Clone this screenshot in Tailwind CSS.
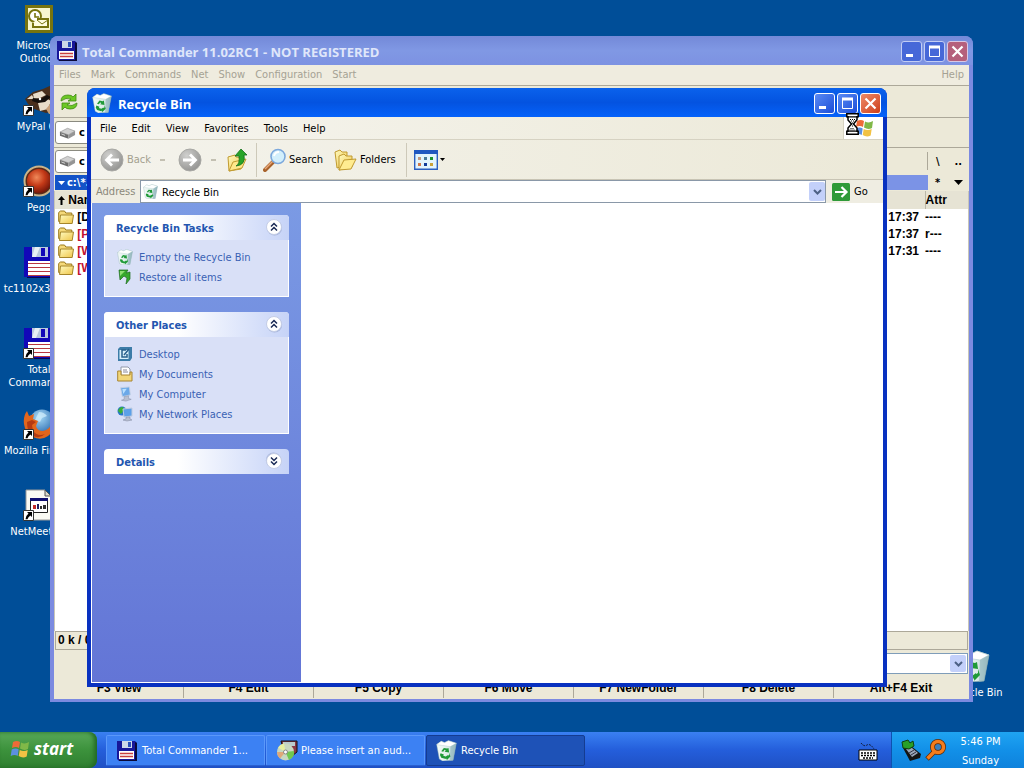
<!DOCTYPE html>
<html lang="en">
<head>
  <meta charset="UTF-8" />
  <meta name="viewport" content="width=device-width, initial-scale=1.0" />
  <title>Recycle Bin</title>
  <script src="https://cdn.jsdelivr.net/npm/@tailwindcss/browser@4"></script>
</head>
<body class="h-screen overflow-hidden flex flex-col bg-[#004e98] font-['DejaVu_Sans_Condensed','DejaVu_Sans',sans-serif] text-[11px] leading-[13px] text-black cursor-default">

  <!-- Shared icons -->
  <svg class="absolute w-0 h-0" aria-hidden="true">
    <defs>
      <linearGradient id="folderFill" x1="0" y1="0" x2="1" y2="1">
        <stop offset="0" stop-color="#fffbc0" /><stop offset="1" stop-color="#efc548" />
      </linearGradient>
      <linearGradient id="binFill" x1="0" y1="0" x2="1" y2="0">
        <stop offset="0" stop-color="#f4fbf8" /><stop offset="0.6" stop-color="#dcece9" /><stop offset="1" stop-color="#9dbcc0" />
      </linearGradient>
      <radialGradient id="greyBall" cx="0.35" cy="0.3" r="0.8">
        <stop offset="0" stop-color="#d0d0ce" /><stop offset="1" stop-color="#8f8f8d" />
      </radialGradient>
      <radialGradient id="redBall" cx="0.4" cy="0.35" r="0.7">
        <stop offset="0" stop-color="#f08a5a" /><stop offset="0.5" stop-color="#c43a18" /><stop offset="1" stop-color="#6e1408" />
      </radialGradient>
      <radialGradient id="globe" cx="0.4" cy="0.3" r="0.8">
        <stop offset="0" stop-color="#a8dcf8" /><stop offset="1" stop-color="#1f5fa8" />
      </radialGradient>
    </defs>
    <symbol id="floppy" viewBox="0 0 32 32">
      <path d="M1 1h28l2 2v28H1z" fill="#1208b8" />
      <path d="M31 3v28H4v1h28V4z" fill="#0a0650" />
      <path d="M9 1h16v10H9z" fill="#b9c8dc" />
      <path d="M12 1h5l-4 10h-4z" fill="#e8f0f4" />
      <path d="M18 2h4v8h-4z" fill="#1208b8" />
      <path d="M5 15h27v15H5z" fill="#fff" />
      <path d="M5 17.500h27M5 21.500h27M5 25.500h27M5 29.500h27" stroke="#b83840" />
    </symbol>
    <symbol id="floppySmall" viewBox="0 0 20 20">
      <path d="M0 0h18l2 2v18H2l-2-2z" fill="#17179a" />
      <path d="M18 1l2 1v18H2v-1h16z" fill="#0a0a38" />
      <path d="M5 0h10v7H5z" fill="#cdd9e8" />
      <path d="M11 1h3v5h-3z" fill="#2a50b8" />
      <path d="M2 10h15v8H2z" fill="#fff" />
      <path d="M3 12.500h13M3 15.500h13" stroke="#c84040" stroke-width="1.300" />
    </symbol>
    <symbol id="bin" viewBox="0 0 32 32">
      <path d="M1 7l7-5 5 2 6-3 12 4-5 26-16 1-5-3z" fill="url(#binFill)" stroke="#8fb0b4" stroke-width="0.7" />
      <path d="M1 7l7-5 5 2 6-3 12 4-9 5z" fill="#fff" stroke="#b8d0d2" stroke-width="0.7" />
      <path d="M22 10l9-5-5 26-5 1z" fill="#8fb4bc" opacity="0.6" />
      <path d="M8 17l4-5 5 1 2-1 1 7-7-1 2-2-2-1-2 3zM7 20l5 2-1 2 4 1v4l-7-2-2-4zM20 19l2 6-5 5v1l-3-5 4-3v1l2-1z" fill="#1f9a38" />
    </symbol>
    <symbol id="shortcut" viewBox="0 0 11 11">
      <path d="M.5.5h10v10H.5z" fill="#fff" stroke="#333" />
      <path d="M4 2h5v5L7.500 5.500Q5 7 4.500 9.200H2.500Q2.600 6 5.500 3.600z" fill="#000" />
    </symbol>
    <symbol id="folder" viewBox="0 0 16 15">
      <path d="M.7 11.500V2.500L2.500 1h4l1.300 2h6v9z" fill="#f5d97a" stroke="#9a7818" stroke-width="1" />
      <path d="M2.500 5h13l-1.300 8.500H1.500z" fill="url(#folderFill)" stroke="#a5852a" stroke-width="1" />
    </symbol>
    <symbol id="drive" viewBox="0 0 18 12">
      <path d="M1 5l8-4 8 3-7 4z" fill="#d0d0d0" stroke="#888" stroke-width="0.6" />
      <path d="M1 5l9 3v4L1 9z" fill="#6c6c6c" />
      <path d="M10 8l7-4v4l-7 4z" fill="#959595" />
      <path d="M2.500 7l4 1.500" stroke="#ddd" />
    </symbol>
    <symbol id="flag" viewBox="0 0 20 20">
      <path d="M3 3q4-2 7 0l-1 6Q6 7 2 9z" fill="#ee6a38" />
      <path d="M11 3.500q4 2 8-.5l-1 7q-4 2-8-.5z" fill="#80b848" />
      <path d="M1.700 10.500q4-2 7 0l-1 6.500q-3-2-7 0z" fill="#5c90e0" />
      <path d="M9.700 11q4 2 8 0l-1 6.500q-4 2-8-.5z" fill="#f2c244" />
    </symbol>
    <symbol id="chevrons" viewBox="0 0 18 18">
      <circle cx="9.500" cy="9.800" r="7.600" fill="#8d9fc8" opacity="0.6" />
      <circle cx="9" cy="9" r="7.500" fill="#fff" stroke="#c4cde6" />
      <path d="M6 8.500l3-3 3 3M6 12.500l3-3 3 3" fill="none" stroke="#1a2a55" stroke-width="1.500" />
    </symbol>
    <symbol id="pc" viewBox="0 0 18 18">
      <path d="M4 2l10-1 1 9-9 2z" fill="#6ba8e8" stroke="#c6d2e4" />
      <path d="M6 3.500l5-.5-4 6z" fill="#b8e0ff" />
      <path d="M8 12l5-1v3l3 1-6 2-5-1 3-1z" fill="#b8bfd0" stroke="#7e879f" stroke-width="0.5" />
    </symbol>
  </svg>

  <!-- Desktop -->
  <main class="relative flex-1 overflow-hidden">
    <ul class="w-[78px] pt-px text-white text-center whitespace-nowrap">
      <li class="h-[81px] pt-[2px]">
        <svg class="w-8 h-8 mx-auto mb-1" viewBox="0 0 32 32">
          <path d="M2 2h28v28H2z" fill="#77740f" /><path d="M5 5h22v22H5z" fill="#f7f6cf" />
          <circle cx="12" cy="13" r="6" fill="#fff" stroke="#77740f" stroke-width="2" />
          <path d="M12 10v4h4" fill="none" stroke="#77740f" stroke-width="1.600" />
          <path d="M14 16h11v8H10v-4" fill="#fffde0" stroke="#77740f" stroke-width="2" />
          <path d="M14 17l5 4 6-4" fill="none" stroke="#77740f" />
        </svg>
        Microsoft<br />Outlook
      </li>
      <li class="h-[81px] pt-[2px]">
        <div class="relative w-8 mx-auto mb-1">
          <svg class="w-8 h-8" viewBox="0 0 32 32">
            <path d="M2 15l8-7 10-3 9-4 3 6v20l-9 2-12-4-6-5z" fill="#4a2f1c" />
            <path d="M10 10l9-3 4 4-6 3-6 1zM4 15l5-4 2 4zM15 19l8-5 5 3-3 8-8 2z" fill="#e8dcc8" />
            <path d="M10 14l8 1 6-4 4 2-6 5-7 1-6-2z" fill="#16100c" />
            <path d="M23 25l5-6 4 2v8l-6 1z" fill="#c8a07a" />
            <circle cx="17" cy="15" r="1.200" fill="#fff" />
          </svg>
          <svg class="absolute left-0 bottom-0 w-[11px] h-[11px]"><use href="#shortcut" /></svg>
        </div>
        MyPal 68
      </li>
      <li class="h-[81px] pt-[2px]">
        <div class="relative w-8 mx-auto mb-1">
          <svg class="w-8 h-8" viewBox="0 0 32 32">
            <circle cx="16" cy="16" r="14.500" fill="#5a2a18" stroke="#c9b48a" stroke-width="2" />
            <circle cx="16" cy="16" r="12" fill="url(#redBall)" />
          </svg>
          <svg class="absolute left-0 bottom-0 w-[11px] h-[11px]"><use href="#shortcut" /></svg>
        </div>
        Pego
      </li>
      <li class="h-[81px] pt-[2px]">
        <svg class="w-8 h-8 mx-auto mb-1"><use href="#floppy" /></svg>
        tc1102x32_64
      </li>
      <li class="h-[81px] pt-[2px]">
        <div class="relative w-8 mx-auto mb-1">
          <svg class="w-8 h-8"><use href="#floppy" /></svg>
          <svg class="absolute left-0 bottom-0 w-[11px] h-[11px]"><use href="#shortcut" /></svg>
        </div>
        Total<br />Commander
      </li>
      <li class="h-[81px] pt-[2px]">
        <div class="relative w-8 mx-auto mb-1">
          <svg class="w-8 h-8" viewBox="0 0 32 32">
            <circle cx="19" cy="14" r="12.500" fill="url(#globe)" />
            <path d="M16 4q5 0 8 4l-5 2-2 4-5-2z" fill="#d4f0fc" opacity="0.7" />
            <path d="M1 16Q0 8 4 3l2 5 5-2-1 5 5 2-2 5q1 5 7 5 7-1 9-9 3 9-4 14-7 5-15 1Q2 25 1 16z" fill="#e2661c" />
            <path d="M4 14l5-2 4 2-4 3 1 6q5 6 12 3-5 5-12 2Q4 24 4 14z" fill="#b53a12" />
          </svg>
          <svg class="absolute left-0 bottom-0 w-[11px] h-[11px]"><use href="#shortcut" /></svg>
        </div>
        Mozilla Firefox
      </li>
      <li class="h-[81px] pt-[2px]">
        <div class="relative w-8 mx-auto mb-1">
          <svg class="w-8 h-8" viewBox="0 0 32 32">
            <path d="M3 1h19l6 6v24H3z" fill="#fbfbf4" stroke="#999" />
            <path d="M22 1v6h6z" fill="#dcdcd0" stroke="#555" />
            <path d="M7.500 9.500h17v14h-17z" fill="#fff" stroke="#222" />
            <path d="M7 9h18v3H7z" fill="#101070" />
            <path d="M10 16h3v4h-3z" fill="#c02828" /><path d="M14 15h2v5h-2z" fill="#202060" /><path d="M17 17h2v3h-2zM20 16h3v4h-3z" fill="#303030" />
          </svg>
          <svg class="absolute left-0 bottom-0 w-[11px] h-[11px]"><use href="#shortcut" /></svg>
        </div>
        NetMeeting
      </li>
    </ul>

    <div class="absolute right-[18px] bottom-[33px] w-16 text-white text-center whitespace-nowrap">
      <svg class="w-8 h-8 mx-auto mb-1"><use href="#bin" /></svg>
      Recycle Bin
    </div>

    <!-- Total Commander window -->
    <section class="absolute left-[50px] right-[51px] top-9 bottom-[30px] flex flex-col rounded-t-lg overflow-hidden bg-[#7b8ae0] px-1 pb-[3px]">
      <header class="h-[29px] shrink-0 -mx-1 pl-[7px] pr-[5px] flex items-center bg-linear-to-b from-[#7389d8] via-[#8098e4] to-[#7d92e2] text-[#dfe6fa]">
        <svg class="w-5 h-5 mr-[5px]"><use href="#floppySmall" /></svg>
        <h1 class="flex-1 pt-[2px] font-bold text-[13px] leading-4 font-['Open_Sans','Noto_Sans',sans-serif]">Total Commander 11.02RC1 - NOT REGISTERED</h1>
        <div class="flex gap-[2px] pt-[2px]">
          <button aria-label="Minimize" class="size-[21px] rounded-[3px] border border-[#c2cdf4] bg-[#4668d8]"><svg viewBox="0 0 19 19"><path d="M4 13.500h7" stroke="#fff" stroke-width="3" /></svg></button>
          <button aria-label="Maximize" class="size-[21px] rounded-[3px] border border-[#c2cdf4] bg-[#4668d8]"><svg viewBox="0 0 19 19"><path d="M4.500 5h10v9.500h-10z" fill="none" stroke="#fff" /><path d="M4 5h11" stroke="#fff" stroke-width="3" /></svg></button>
          <button aria-label="Close" class="size-[21px] rounded-[3px] border border-[#d8c8e4] bg-[#b5607c]"><svg viewBox="0 0 19 19"><path d="M4.500 4.500l10 10M14.500 4.500l-10 10" stroke="#fff" stroke-width="2.200" /></svg></button>
        </div>
      </header>
      <nav class="h-[21px] shrink-0 flex items-center px-[5px] pb-px gap-[10px] bg-[#efecdf] border-b border-[#aca899] text-[#a5a294]">
        <a href="#">Files</a><a href="#">Mark</a><a href="#">Commands</a><a href="#">Net</a><a href="#">Show</a><a href="#">Configuration</a><a href="#">Start</a>
        <a href="#" class="ml-auto">Help</a>
      </nav>
      <div class="h-8 shrink-0 flex items-center pl-[5px] bg-[#ece9d8] border-b border-[#aca899]">
        <button aria-label="Reread source">
          <svg class="w-5 h-[18px]" viewBox="0 0 20 18">
            <path d="M2 8q0-6 7-6 4 0 5 2l3-3v7h-8l3-2Q7 4 2 8z" fill="#6cc824" stroke="#3f8a10" stroke-width="0.8" />
            <path d="M18 10q0 6-7 6-4 0-5-2l-3 3v-7h8l-3 2q5 2 10-2z" fill="#6cc824" stroke="#3f8a10" stroke-width="0.8" />
          </svg>
        </button>
      </div>
      <div class="h-[30px] shrink-0 flex items-center pl-px bg-[#ece9d8] border-b border-[#aca899] font-bold">
        <label class="w-16 h-[23px] flex items-center pl-[3px] gap-[3px] rounded-[3px] bg-white border border-[#8a8a80]">
          <svg class="w-[17px] h-3"><use href="#drive" /></svg>
          <select aria-label="Drive" class="appearance-none w-8 font-bold"><option>c</option></select>
        </label>
      </div>
      <div class="h-[26px] shrink-0 flex items-center pl-px bg-[#ece9d8] font-bold">
        <label class="w-16 h-[23px] flex items-center pl-[3px] gap-[3px] rounded-[3px] bg-white border border-[#8a8a80]">
          <svg class="w-[17px] h-3"><use href="#drive" /></svg>
          <select aria-label="Panel drive" class="appearance-none w-8 font-bold"><option>c</option></select>
        </label>
        <div class="ml-auto h-[18px] w-[42px] flex items-center justify-between border-l border-[#aca899] pl-2 pr-[7px]">
          <button>\</button><button>..</button>
        </div>
      </div>
      <div class="h-[17px] shrink-0 flex items-center bg-[#ece9d8] font-bold">
        <div class="w-1/2 h-[15px] ml-px pl-[3px] flex items-center gap-[2px] bg-[#1353c8] text-white text-[11px]">
          <svg class="w-[7px] h-1" viewBox="0 0 7 4"><path d="M0 0h7L3.500 4z" fill="#fff" /></svg>c:\*.*
        </div>
        <div class="flex-1 h-[15px] bg-[#7b93e6]"></div>
        <div class="w-[41px] flex items-center justify-between pl-[7px] pr-[6px]">
          <button>*</button>
          <button aria-label="Directory history"><svg class="w-[9px] h-[5px]" viewBox="0 0 9 5"><path d="M0 0h9L4.500 5z" /></svg></button>
        </div>
      </div>
      <!-- File list -->
      <div class="flex-1 min-h-0 bg-white border-x border-[#c9c6b8] font-['Liberation_Sans',Arial,sans-serif]">
        <table class="w-full text-xs leading-[17px] font-bold">
          <thead>
            <tr class="h-[18px] bg-[#e6e3d4] text-left">
              <th class="pl-[3px]"><svg class="inline w-[7px] h-[9px]" viewBox="0 0 7 9"><path d="M3.500 0L7 4H4.500v5h-2V4H0z" /></svg> Name</th>
              <th></th><th class="w-[43px] border-l border-[#bab7a8]">Attr</th>
            </tr>
          </thead>
          <tbody>
            <tr><td class="pl-[3px]"><svg class="inline w-4 h-[15px]"><use href="#folder" /></svg> [D]</td><td class="text-right pr-[6px]">17:37</td><td>----</td></tr>
            <tr><td class="pl-[3px] text-[#c01030]"><svg class="inline w-4 h-[15px]"><use href="#folder" /></svg> [P]</td><td class="text-right pr-[6px]">17:37</td><td>r---</td></tr>
            <tr><td class="pl-[3px] text-[#c01030]"><svg class="inline w-4 h-[15px]"><use href="#folder" /></svg> [W]</td><td class="text-right pr-[6px]">17:31</td><td>----</td></tr>
            <tr><td class="pl-[3px] text-[#c01030]"><svg class="inline w-4 h-[15px]"><use href="#folder" /></svg> [W]</td><td></td><td></td></tr>
          </tbody>
        </table>
      </div>
      <div class="shrink-0 bg-[#ece9d8] px-px font-bold text-xs font-['Liberation_Sans',Arial,sans-serif]">
        <p class="h-[19px] px-[2px] leading-[17px] border border-[#aca899]">0 k / 0 k</p>
        <label class="mt-[3px] h-[21px] ml-auto w-3/4 flex items-center bg-white border border-[#7f9db9] pr-px">
          <select aria-label="Command line" class="appearance-none flex-1"><option></option></select>
          <span class="w-4 h-[17px] rounded-[2px] bg-[#c3d0fa] flex items-center justify-center"><svg class="w-[9px] h-[6px]" viewBox="0 0 9 6"><path d="M1 1l3.500 3.500L8 1" fill="none" stroke="#4d6185" stroke-width="2" /></svg></span>
        </label>
        <div class="mt-[3px] mb-px h-[21px] grid grid-cols-[129fr_repeat(5,130fr)_134fr] text-center divide-x divide-[#aca899]">
          <button>F3 View</button><button>F4 Edit</button><button>F5 Copy</button><button>F6 Move</button><button>F7 NewFolder</button><button>F8 Delete</button><button>Alt+F4 Exit</button>
        </div>
      </div>
    </section>

    <!-- Recycle Bin window -->
    <section class="absolute left-[87px] right-[137px] top-[88px] bottom-[45px] flex flex-col rounded-t-lg overflow-hidden bg-[#0831c0] px-1 pb-1">
      <header class="h-[29px] shrink-0 -mx-1 pl-[5px] pr-[6px] flex items-center bg-linear-to-b from-[#0b62ec] via-[#0453e0] to-[#0562fa] text-white">
        <svg class="w-5 h-5 mr-[6px]"><use href="#bin" /></svg>
        <h1 class="flex-1 pt-[2px] font-bold text-[13px] leading-4 font-['Open_Sans','Noto_Sans',sans-serif]">Recycle Bin</h1>
        <div class="flex gap-[2px] pt-[2px]">
          <button aria-label="Minimize" class="size-[21px] rounded-[3px] border border-white bg-linear-to-br from-[#5a8af4] to-[#1c4cd8]"><svg viewBox="0 0 19 19"><path d="M4 13.500h7" stroke="#fff" stroke-width="3" /></svg></button>
          <button aria-label="Maximize" class="size-[21px] rounded-[3px] border border-white bg-linear-to-br from-[#5a8af4] to-[#1c4cd8]"><svg viewBox="0 0 19 19"><path d="M4.500 5h10v9.500h-10z" fill="none" stroke="#fff" /><path d="M4 5h11" stroke="#fff" stroke-width="3" /></svg></button>
          <button aria-label="Close" class="size-[21px] rounded-[3px] border border-white bg-linear-to-br from-[#ee8a68] to-[#cc3c14]"><svg viewBox="0 0 19 19"><path d="M4.500 4.500l10 10M14.500 4.500l-10 10" stroke="#fff" stroke-width="2.200" /></svg></button>
        </div>
      </header>
      <nav class="h-[23px] shrink-0 flex items-center pl-[9px] gap-[15px] bg-linear-to-r from-[#f6f5ef] to-[#ece9d8] border-b border-[#d6d2c2]">
        <a href="#">File</a><a href="#">Edit</a><a href="#">View</a><a href="#">Favorites</a><a href="#">Tools</a><a href="#">Help</a>
        <span class="ml-auto w-10 h-full bg-white border-l border-[#d6d2c2] flex items-center justify-center"><svg class="w-5 h-5"><use href="#flag" /></svg></span>
      </nav>
      <div class="h-10 shrink-0 flex items-center pl-[9px] bg-linear-to-r from-[#f4f3ec] to-[#ece9d8] border-b border-[#c8c4b4]">
        <button class="flex items-center gap-[3px] text-[#a3a08f]">
          <svg class="w-6 h-6" viewBox="0 0 24 24"><circle cx="12" cy="12" r="11" fill="url(#greyBall)" stroke="#a8a8a4" /><path d="M19 12H7M12 6.500L6.500 12l5.500 5.500" fill="none" stroke="#fff" stroke-width="2.800" /></svg>
          Back
        </button>
        <span class="w-[5px] h-[2px] bg-[#c3c0b2] ml-[9px] mr-[13px]"></span>
        <button aria-label="Forward"><svg class="w-6 h-6" viewBox="0 0 24 24"><circle cx="12" cy="12" r="11" fill="url(#greyBall)" stroke="#a8a8a4" /><path d="M5 12h12M12 6.500l5.500 5.500-5.500 5.500" fill="none" stroke="#fff" stroke-width="2.800" /></svg></button>
        <span class="w-[5px] h-[2px] bg-[#c3c0b2] ml-[9px] mr-[6px]"></span>
        <button aria-label="Up" class="ml-1">
          <svg class="w-6 h-6" viewBox="0 0 24 24">
            <path d="M2 9l7-2 1 2 7 1-2 11-12 2z" fill="url(#folderFill)" stroke="#c09a30" />
            <path d="M3 23l4-9 13-3-4 9z" fill="#ffe88a" stroke="#c09a30" />
            <path d="M10 18q4-2 3-10H9l6-7 6 6h-3q2 10-8 11z" fill="#28a428" stroke="#14701c" stroke-width="0.8" />
          </svg>
        </button>
        <span class="w-px h-[34px] bg-[#cdc9b9] mx-[6px]"></span>
        <button class="flex items-center gap-[2px]">
          <svg class="w-6 h-6" viewBox="0 0 24 24">
            <path d="M2 22l8-8" stroke="#a8622c" stroke-width="4" stroke-linecap="round" /><path d="M2 21l8-8" stroke="#e8a878" stroke-width="1.500" />
            <circle cx="15" cy="8.500" r="7" fill="#d2effc" stroke="#7ca8dc" stroke-width="1.600" /><path d="M11 8q1-4 5-4" fill="none" stroke="#fff" stroke-width="2" />
          </svg>
          Search
        </button>
        <button class="flex items-center gap-[2px] ml-[11px]">
          <svg class="w-6 h-6" viewBox="0 0 24 24">
            <path d="M1 4l5-2 2 2h5v13L3 20z" fill="url(#folderFill)" stroke="#c09a30" />
            <path d="M5 8l5-2 2 2 6 0v11L5 22z" fill="url(#folderFill)" stroke="#c09a30" />
            <path d="M5 22l5-10 12-1-5 10z" fill="#ffec90" stroke="#c09a30" />
          </svg>
          Folders
        </button>
        <span class="w-px h-[34px] bg-[#cdc9b9] ml-[10px] mr-[7px]"></span>
        <button aria-label="Views" class="flex items-center gap-[2px]">
          <svg class="w-6 h-5" viewBox="0 0 24 20">
            <path d="M.7.7h22.600v18.600H.7z" fill="#e2f4fc" stroke="#2a5fc0" stroke-width="1.400" /><path d="M0 0h24v4H0z" fill="#2058c0" />
            <path d="M4 7h3v3H4z" fill="#c49a80" /><path d="M10 7h3v3h-3z" fill="#4a7a98" /><path d="M16 7h3v3h-3z" fill="#1c9230" />
            <path d="M4 13h3v3H4z" fill="#d07848" /><path d="M10 13h3v3h-3z" fill="#123c98" /><path d="M16 13h3v3h-3z" fill="#caa238" />
          </svg>
          <svg class="w-[5px] h-[3px]" viewBox="0 0 5 3"><path d="M0 0h5L2.500 3z" /></svg>
        </button>
      </div>
      <form class="h-[23px] shrink-0 flex items-center bg-[#efede2]">
        <label for="address" class="w-[49px] pl-[5px] text-[#8b887a]">Address</label>
        <div class="flex-1 h-full flex items-center bg-white border border-[#8a98a8] pl-[2px]">
          <svg class="w-[15px] h-[15px] mr-1"><use href="#bin" /></svg>
          <input id="address" type="text" value="Recycle Bin" class="flex-1 min-w-0 pt-px outline-none" />
          <button type="button" aria-label="Show addresses" class="w-4 h-[19px] rounded-[2px] bg-[#c3d0fa] flex items-center justify-center"><svg class="w-[9px] h-[6px]" viewBox="0 0 9 6"><path d="M1 1l3.500 3.500L8 1" fill="none" stroke="#4d6185" stroke-width="2" /></svg></button>
        </div>
        <button type="button" class="w-[57px] pl-[6px] flex items-center gap-1">
          <svg class="w-[18px] h-[18px]" viewBox="0 0 18 18"><rect width="18" height="18" rx="1.500" fill="#2f9a38" /><path d="M3 9h11M9.500 4l5 5-5 5" fill="none" stroke="#fff" stroke-width="2.200" /></svg>
          Go
        </button>
      </form>
      <div class="flex-1 min-h-0 flex bg-white border-l border-b border-white">
        <aside class="w-[209px] shrink-0 px-3 pt-3 flex flex-col gap-[15px] bg-linear-to-b from-[#7b9ae4] to-[#6375d6] text-[#3a62b4]">
          <section class="bg-[#d9e0f7] border border-t-0 border-white rounded-t-[4px]">
            <h2 class="h-[25px] -mx-px pl-3 pr-[6px] pt-px flex items-center justify-between rounded-t-[4px] bg-linear-to-r from-white from-40% to-[#c6d3f7] font-bold text-[#2356b0]">Recycle Bin Tasks
              <button aria-label="Collapse" class="pb-[3px]"><svg class="size-[18px]"><use href="#chevrons" /></svg></button>
            </h2>
            <ul class="pl-3 pt-[7px] pb-[9px] flex flex-col">
              <li class="h-5 flex items-center gap-[6px]"><svg class="size-4"><use href="#bin" /></svg><a href="#">Empty the Recycle Bin</a></li>
              <li class="h-5 flex items-center gap-[6px]">
                <svg class="size-4" viewBox="0 0 16 16"><path d="M2 1h9L9 4l4-1v7l-4 5 1-6-3-2-4 4z" fill="#36a82c" stroke="#1c6c1c" stroke-width="0.7" /><path d="M3 2h5L3 7z" fill="#8de070" /></svg>
                <a href="#">Restore all items</a>
              </li>
            </ul>
          </section>
          <section class="bg-[#d9e0f7] border border-t-0 border-white rounded-t-[4px]">
            <h2 class="h-[25px] -mx-px pl-3 pr-[6px] pt-px flex items-center justify-between rounded-t-[4px] bg-linear-to-r from-white from-40% to-[#c6d3f7] font-bold text-[#2356b0]">Other Places
              <button aria-label="Collapse" class="pb-[3px]"><svg class="size-[18px]"><use href="#chevrons" /></svg></button>
            </h2>
            <ul class="pl-3 pt-[7px] pb-[9px] flex flex-col">
              <li class="h-5 flex items-center gap-[6px]">
                <svg class="size-4" viewBox="0 0 16 16"><path d="M1 3l2-2h12v11l-2 3H1z" fill="#3c7ca8" /><path d="M2.500 4h9v9h-9z" fill="#d8f0fa" /><path d="M9 4H5v7h5V8M7 9l5-6" fill="none" stroke="#28608c" stroke-width="1.500" /></svg>
                <a href="#">Desktop</a>
              </li>
              <li class="h-5 flex items-center gap-[6px]">
                <svg class="size-4" viewBox="0 0 16 16"><path d="M4 1h7l2 2v8H4z" fill="#fff" stroke="#9098a8" /><path d="M.7 5L4 5v4h9V6l2 0v9H.7z" fill="#f2d678" stroke="#a88430" /><path d="M6 4h4M6 6h5" stroke="#889" /></svg>
                <a href="#">My Documents</a>
              </li>
              <li class="h-5 flex items-center gap-[6px]"><svg class="size-4"><use href="#pc" /></svg><a href="#">My Computer</a></li>
              <li class="h-5 flex items-center gap-[6px]">
                <svg class="size-4" viewBox="0 0 16 16"><circle cx="5" cy="5" r="4.500" fill="#2878c8" /><path d="M1 5q1-4 5-4l1 3-3 4z" fill="#38b038" /><path d="M6 3l9-1v8l-8 1z" fill="#5ca0e8" stroke="#c0cce0" /><path d="M9 11h4v2l2 1-5 1-4-1 3-1z" fill="#b8bfd0" stroke="#7e879f" stroke-width="0.5" /></svg>
                <a href="#">My Network Places</a>
              </li>
            </ul>
          </section>
          <section>
            <h2 class="h-[25px] pl-3 pr-[6px] pt-px flex items-center justify-between rounded-t-[4px] bg-linear-to-r from-white from-40% to-[#c6d3f7] font-bold text-[#2356b0]">Details
              <button aria-label="Expand" class="pb-[3px]"><svg class="size-[18px] rotate-180"><use href="#chevrons" /></svg></button>
            </h2>
          </section>
        </aside>
      </div>
    </section>

    <!-- Busy cursor -->
    <svg class="absolute right-[165px] top-[113px] w-[13px] h-[22px]" viewBox="0 0 13 22">
      <path d="M.8.8h11.400v3H11v3L7.500 11l3.500 4v3.200h1.200v3H.8v-3H2V15l3.500-4L2 7V3.800H.8z" fill="#fff" stroke="#000" stroke-width="1.500" />
      <path d="M1 3.800h11M1 18.200h11" stroke="#000" stroke-width="1.200" />
      <path d="M4 6.500h5M5 8h3M6 10h1M6 13h1M4.500 15.500h4M3.500 17h6" stroke="#000" stroke-dasharray="1 1" />
    </svg>
  </main>

  <!-- Taskbar -->
  <footer class="h-9 shrink-0 flex bg-linear-to-b from-[#3a80f2] via-[#245edb] to-[#1f50c4] text-white">
    <button class="w-[97px] h-full pl-[10px] pb-[2px] flex items-center gap-1 rounded-r-lg bg-linear-to-b from-[#58a858] via-[#3c923c] to-[#2f7f30] shadow-[inset_-3px_0_4px_#226a24] font-['Open_Sans','Noto_Sans',sans-serif] font-bold italic text-[17px] leading-5">
      <svg class="w-5 h-5"><use href="#flag" /></svg>start
    </button>
    <div class="ml-[9px] flex-1 flex gap-px pt-[3px] pb-[2px]">
      <button class="w-[159px] flex items-center pl-[10px] gap-[5px] rounded-[2px] bg-[#3c81f3] border border-[#5a98fa] border-b-[#2a60d0]">
        <svg class="w-5 h-5"><use href="#floppySmall" /></svg>Total Commander 1...
      </button>
      <button class="w-[159px] flex items-center pl-[9px] gap-[3px] rounded-[2px] bg-[#3c81f3] border border-[#5a98fa] border-b-[#2a60d0]">
        <svg class="w-[22px] h-[22px]" viewBox="0 0 22 22">
          <path d="M5 1h16v11l-5 4H9z" fill="#8a3844" stroke="#111" /><path d="M7 2h12v4H7z" fill="#bcc" />
          <circle cx="9.500" cy="12" r="8.500" fill="#c8d8c0" /><path d="M9.500 12L2 7.500A8.500 8.500 0 0 1 8 3.600z" fill="#e8f0a0" /><path d="M9.500 12l8.500-1a8.500 8.500 0 0 1-5 9z" fill="#70c850" /><path d="M9.500 12L4 18.500A8.500 8.500 0 0 1 1 12z" fill="#e0a878" />
          <circle cx="9.500" cy="12" r="2" fill="#fff" stroke="#888" />
        </svg>Please insert an aud...
      </button>
      <button class="w-[159px] flex items-center pl-[9px] gap-1 rounded-[2px] bg-[#1e52b7] border border-[#153c90]">
        <svg class="w-[21px] h-[21px]"><use href="#bin" /></svg>Recycle Bin
      </button>
      <button aria-label="Input language" class="ml-auto mr-[13px]">
        <svg class="w-5 h-5" viewBox="0 0 20 20">
          <path d="M3 2q3 4 6 2t7 4" fill="none" stroke="#101830" stroke-dasharray="2 1" /><path d="M1 9h18v10H1z" fill="#fff" stroke="#000" />
          <path d="M3 12h14M3 14.500h14M5 17h10" stroke="#000" stroke-width="1.600" stroke-dasharray="2 1" />
        </svg>
      </button>
    </div>
    <div class="w-[133px] flex items-center pl-[9px] pr-3 gap-[2px] bg-linear-to-b from-[#1fa4f2] via-[#1290e8] to-[#0f82dc] border-l border-[#0d52b0]">
      <svg class="w-[22px] h-[22px]" viewBox="0 0 22 22">
        <path d="M2 9l8-2 10 8-1 4-10 3z" fill="#141414" /><path d="M5 10l6-1 6 5-6 4z" fill="#9aa6b8" /><path d="M8 14l5-3M10 16l5-3" stroke="#334" />
        <path d="M1 3l6-2 2 3 3-2 1 5-5 3-6-1z" fill="#28a028" stroke="#104010" />
      </svg>
      <svg class="w-[22px] h-[22px]" viewBox="0 0 22 22">
        <path d="M2 20l7-7" stroke="#5a2a08" stroke-width="5" /><circle cx="13" cy="8" r="5.500" fill="#3880c0" stroke="#5a2a08" stroke-width="5" />
        <path d="M2.500 19.500L9 13" stroke="#f47c1c" stroke-width="3.500" /><circle cx="13" cy="8" r="5.500" fill="none" stroke="#f47c1c" stroke-width="3.500" />
      </svg>
      <p class="flex-1 pt-px text-center leading-[19px]">5:46 PM<br />Sunday</p>
    </div>
  </footer>
</body>
</html>
